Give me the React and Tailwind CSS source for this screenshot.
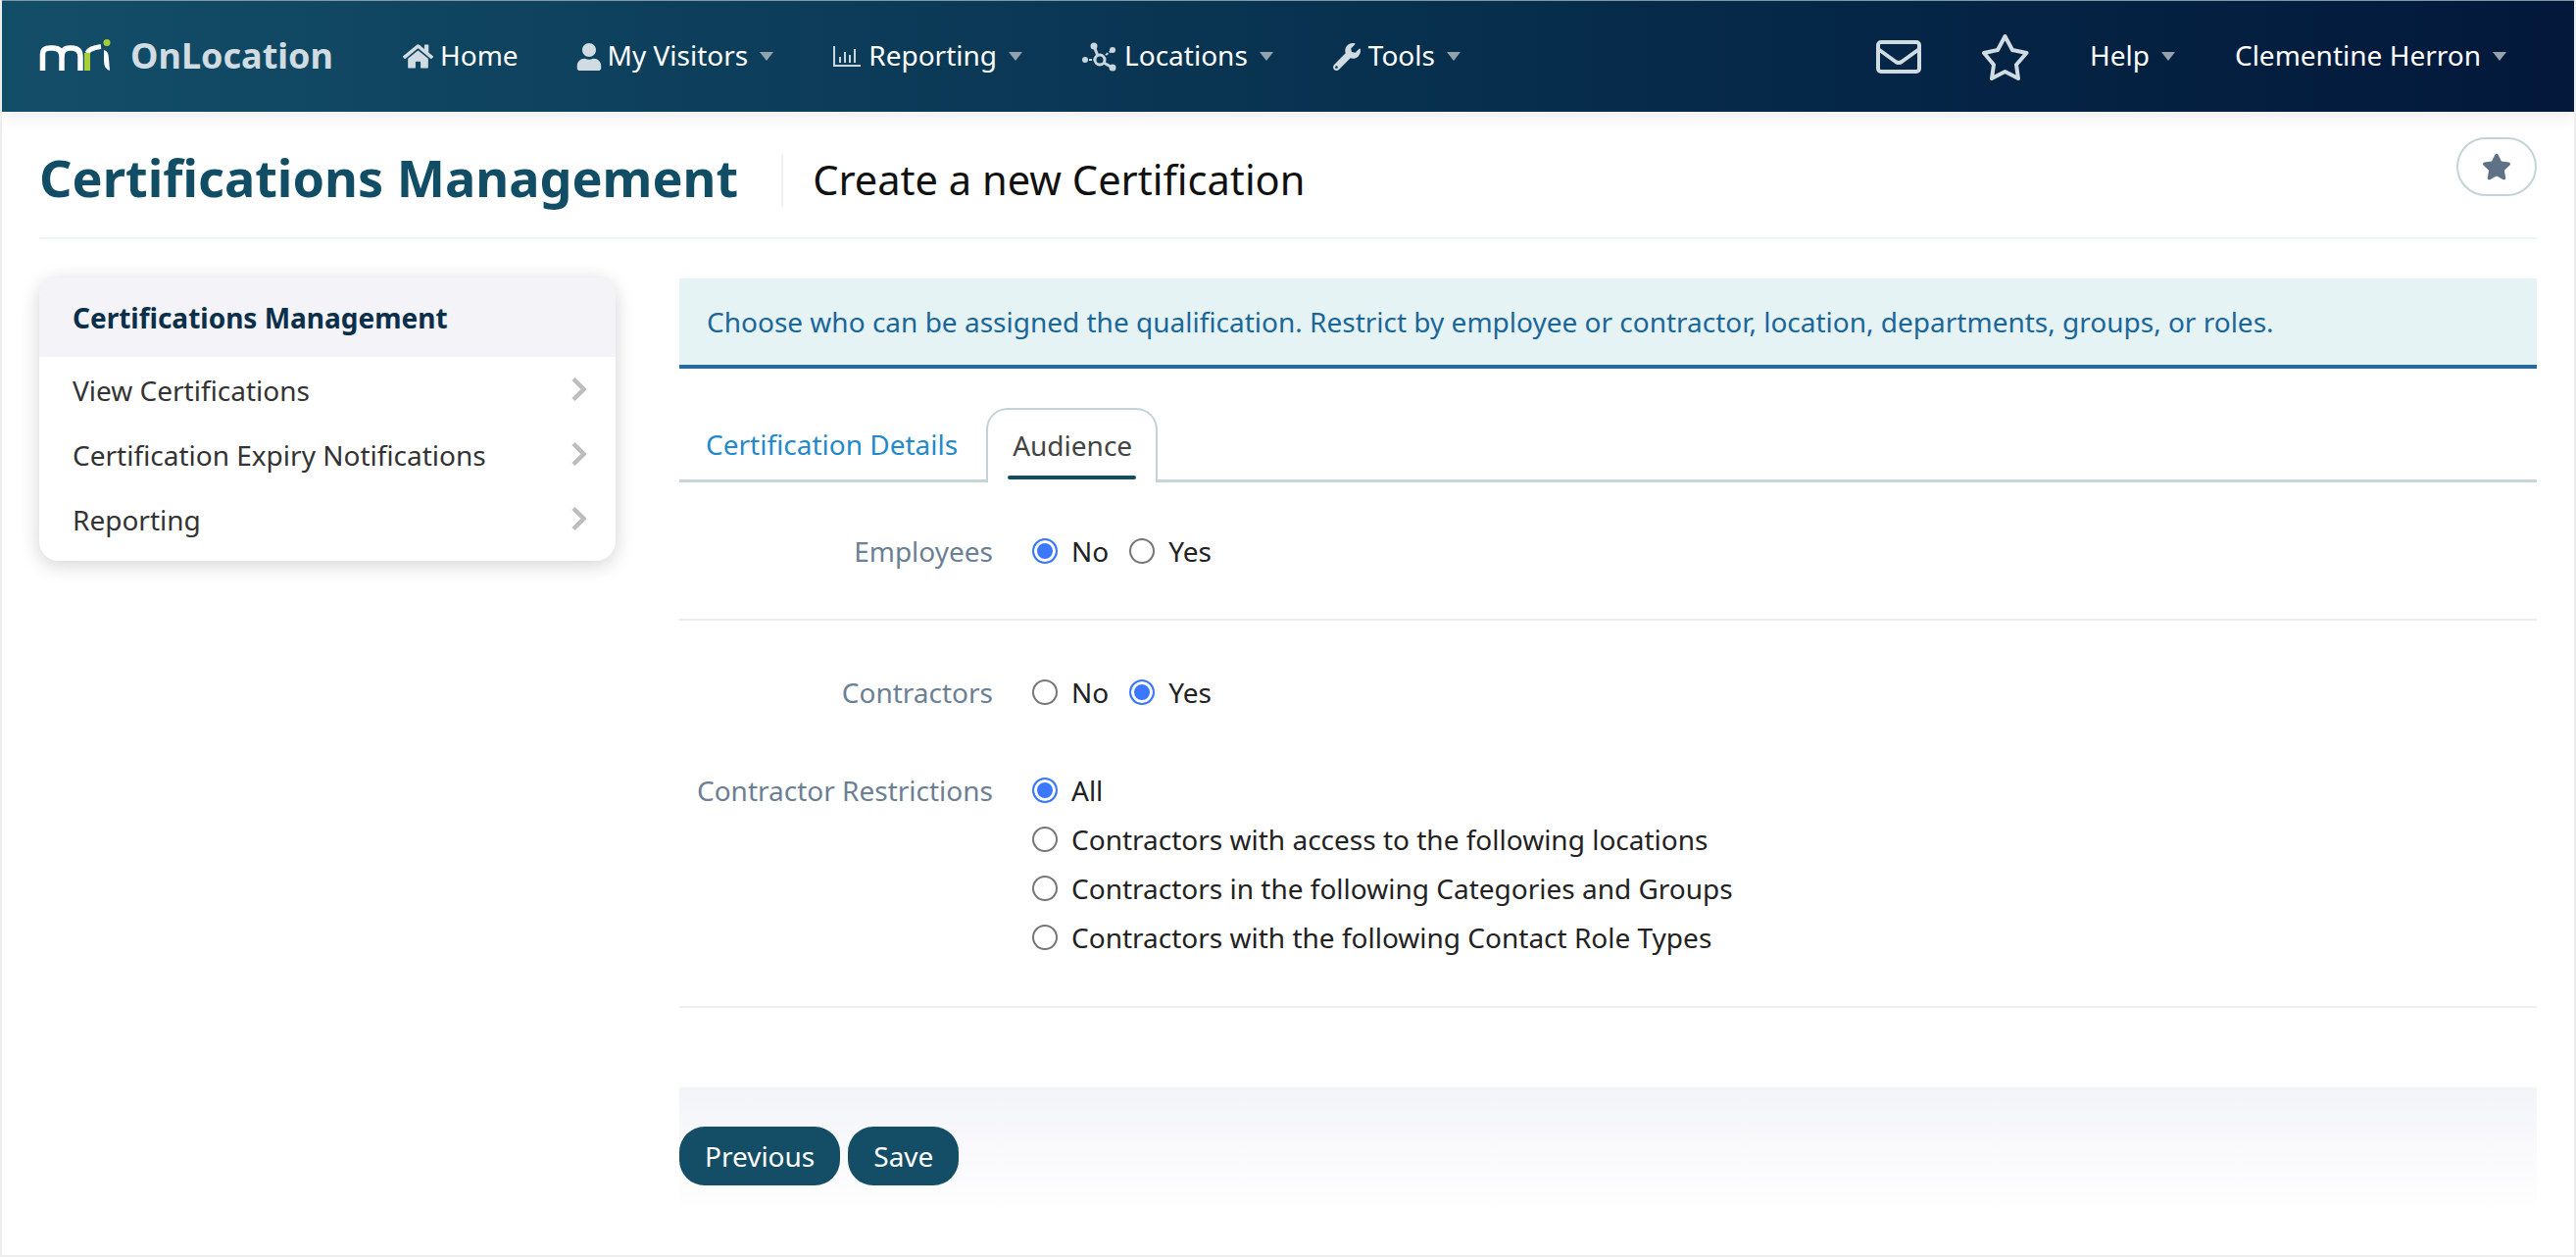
import { FaHome, FaUser, FaWrench, FaStar } from "react-icons/fa";

function Caret() {
  return <span className="ml-3 inline-block h-0 w-0 border-x-[7.5px] border-t-[9px] border-x-transparent border-t-[#93a2ad]" />;
}

function Logo() {
  return (
    <svg width="74" height="36" viewBox="0 0 74 36" fill="none">
      <path d="M3.5 32V15Q3.5 9 11 9H14Q23 9 23 18V32M23 18Q23 9 31 9H33Q42 9 42 18V32" stroke="#fff" strokeWidth="5.5" />
      <path d="M49 14Q51 9 63 7.5" stroke="#fff" strokeWidth="5" />
      <path d="M49 32V14" stroke="#a9cf38" strokeWidth="6" />
      <path d="M66 11Q71 12 71 20L72 32Q66 30 66 22Z" fill="#fff" />
      <circle cx="69" cy="3.5" r="3.5" fill="#a9cf38" />
    </svg>
  );
}

function ChartIcon() {
  return (
    <svg width="28" height="22" viewBox="0 0 28 22" fill="none" stroke="#c9d6dc">
      <path d="M1 0V20H28" strokeWidth="2" />
      <path d="M7 17V11M12 17V6M17 17V9M22 17V3" strokeWidth="2" />
    </svg>
  );
}

function NodesIcon() {
  return (
    <svg width="35" height="30" viewBox="0 0 35 30" fill="none" stroke="#c9d6dc">
      <path d="M12 4L16 14M22 21L31 26" strokeWidth="3" />
      <path d="M24 13L31 8M7 18H12" strokeWidth="2" strokeDasharray="3 1.5" />
      <circle cx="18" cy="18" r="5" strokeWidth="3" />
      <g fill="#c9d6dc" stroke="none">
        <circle cx="12" cy="4" r="3.5" />
        <circle cx="31" cy="8" r="3" />
        <circle cx="3" cy="18" r="3" />
        <circle cx="31" cy="26" r="3.5" />
      </g>
    </svg>
  );
}

function EnvelopeIcon() {
  return (
    <svg width="46" height="34" viewBox="0 0 46 34" fill="none" stroke="#d0dbe2" strokeWidth="4">
      <rect x="2" y="2" width="42" height="30" rx="3" />
      <path d="M2 9L20 22Q23 24 26 22L44 9" strokeLinejoin="round" />
    </svg>
  );
}

function StarOutline() {
  return (
    <svg width="48" height="48" viewBox="0 0 48 48" fill="none" stroke="#d0dbe2" strokeWidth="4" strokeLinejoin="round">
      <path d="M23.5 3L31 17L45.5 20L35 32L37 46L23.5 39L10 46L12 32L2 20L16 17Z" />
    </svg>
  );
}

function Chevron() {
  return (
    <svg width="15" height="24" viewBox="0 0 15 24" fill="none" stroke="#bdbdbd" strokeWidth="4.5" className="-mt-[2px]">
      <path d="M2 1.5L12.5 12L2 22.5" />
    </svg>
  );
}

function NavItem({ icon, label, caret = true, className = "" }) {
  return (
    <div className={`flex items-center ${className}`}>
      {icon}
      <span className="pb-[3px] text-white">{label}</span>
      {caret && <Caret />}
    </div>
  );
}

function Radio({ name, label, checked }) {
  return (
    <label className="flex items-center gap-[14px]">
      <input
        type="radio"
        name={name}
        defaultChecked={checked}
        className="h-[26px] w-[26px] appearance-none rounded-full border-2 border-[#767676] bg-white checked:border-[#3b78ff] checked:bg-[#3b78ff] checked:shadow-[inset_0_0_0_3px_#fff]"
      />
      <span>{label}</span>
    </label>
  );
}

function Label({ children }) {
  return <div className="w-[320px] shrink-0 text-right text-[#6c7f94]">{children}</div>;
}

function SideItem({ label }) {
  return (
    <div className="flex h-[66px] items-center justify-between pl-[34px] pr-[30px] text-[#333]">
      <span>{label}</span>
      <Chevron />
    </div>
  );
}

export default function App() {
  return (
    <div className="flex h-[1282px] flex-col overflow-hidden border-x-2 border-b-2 border-[#eeeeee] bg-white font-['Noto_Sans',sans-serif] text-[28px] leading-[40px] text-[#222]">
      <header className="flex h-[114px] shrink-0 items-center justify-between border-t border-[#7f98a6] bg-gradient-to-r from-[#134e68] to-[#03183a] pl-[38px] pr-[69px] shadow-[0_6px_16px_rgba(0,0,0,0.07)]">
        <div className="flex items-center">
          <Logo />
          <span className="ml-[19px] pb-[2px] text-[36px] font-bold text-[#d0dbe2]">OnLocation</span>
          <NavItem className="ml-[71px]" caret={false} label="Home" icon={<FaHome className="mr-[7px] text-[31px] text-[#d0dbe2]" />} />
          <NavItem className="ml-[58px]" label="My Visitors" icon={<FaUser className="mr-[5px] text-[28px] text-[#d0dbe2]" />} />
          <NavItem className="ml-[61px]" label="Reporting" icon={<span className="mr-2 flex"><ChartIcon /></span>} />
          <NavItem className="ml-[61px]" label="Locations" icon={<span className="mr-2 flex"><NodesIcon /></span>} />
          <NavItem className="ml-[61px]" label="Tools" icon={<FaWrench className="mr-2 text-[28px] text-[#d0dbe2]" />} />
        </div>
        <div className="flex items-center">
          <EnvelopeIcon />
          <span className="ml-[62px] flex"><StarOutline /></span>
          <NavItem className="ml-[62px]" label="Help" />
          <NavItem className="ml-[61px]" label="Clementine Herron" />
        </div>
      </header>

      <div className="mx-[38px] flex h-[130px] shrink-0 justify-between border-b-2 border-[#eef3f3]">
        <div className="flex items-center pt-[6px]">
          <h1 className="text-[52.2px] font-bold leading-none text-[#124d66]">Certifications Management</h1>
          <div className="ml-[44px] mt-[6px] flex h-[54px] items-center border-l-2 border-[#eeeeee] pl-[30px] text-[41.6px] leading-none text-[#111]">
            Create a new Certification
          </div>
        </div>
        <button className="mt-[26px] flex h-[60px] w-[82px] items-center justify-center rounded-[30px] border-2 border-[#c3d3d7] bg-white">
          <FaStar className="text-[30px] text-[#5f7186]" />
        </button>
      </div>

      <div className="mx-[38px] flex flex-1 gap-[65px]">
        <aside className="mt-[39px] h-[289px] w-[588px] shrink-0 overflow-hidden rounded-[20px] bg-white shadow-[0_4px_20px_rgba(0,0,0,0.18)]">
          <div className="flex h-[81px] items-center bg-[#f3f3f8] pl-[34px] font-bold text-[#0a2f4a]">Certifications Management</div>
          <div className="pt-[1px]">
            <SideItem label="View Certifications" />
            <SideItem label="Certification Expiry Notifications" />
            <SideItem label="Reporting" />
          </div>
        </aside>

        <main className="mt-[40px] flex min-w-0 flex-1 flex-col">
          <div className="flex h-[92px] items-center border-b-4 border-[#256a9f] bg-[#e5f3f5] pl-[28px] text-[#1b6699]">
            Choose who can be assigned the qualification. Restrict by employee or contractor, location, departments, groups, or roles.
          </div>

          <div className="mt-[40px] flex h-[76px] items-end border-b-[3px] border-[#c7d5da]">
            <div className="flex h-[73px] items-center px-[27px] text-[#2489cb]">Certification Details</div>
            <div className="relative -mb-[3px] ml-[2px] flex h-[76px] items-center rounded-t-[22px] border-2 border-b-0 border-[#c3d3d7] bg-white pb-[3px] pl-[25px] pr-[24px] text-[#444]">
              Audience
              <span className="absolute bottom-[3px] left-[20px] right-[20px] h-[4px] rounded-full bg-[#114d66]" />
            </div>
          </div>

          <div className="flex h-[141px] items-center gap-[40px] border-b-2 border-[#eeeeee]">
            <Label>Employees</Label>
            <div className="flex gap-[21px]">
              <Radio name="employees" label="No" checked />
              <Radio name="employees" label="Yes" />
            </div>
          </div>

          <div className="mt-[53px] flex h-[40px] items-center gap-[40px]">
            <Label>Contractors</Label>
            <div className="flex gap-[21px]">
              <Radio name="contractors" label="No" />
              <Radio name="contractors" label="Yes" checked />
            </div>
          </div>

          <div className="mt-[55px] flex gap-[40px] border-b-2 border-[#eeeeee] pb-[45px]">
            <div className="flex h-[50px] items-center">
              <Label>Contractor Restrictions</Label>
            </div>
            <div className="flex flex-col leading-[50px]">
              <Radio name="restrictions" label="All" checked />
              <Radio name="restrictions" label="Contractors with access to the following locations" />
              <Radio name="restrictions" label="Contractors in the following Categories and Groups" />
              <Radio name="restrictions" label="Contractors with the following Contact Role Types" />
            </div>
          </div>

          <div className="mt-[81px] flex h-[130px] items-start gap-[8px] bg-gradient-to-b from-[#f3f4f8] to-white pt-[40px]">
            <button className="h-[60px] rounded-[26px] bg-[#134d66] px-[26px] text-white">Previous</button>
            <button className="h-[60px] rounded-[26px] bg-[#134d66] px-[26px] text-white">Save</button>
          </div>
        </main>
      </div>
    </div>
  );
}
